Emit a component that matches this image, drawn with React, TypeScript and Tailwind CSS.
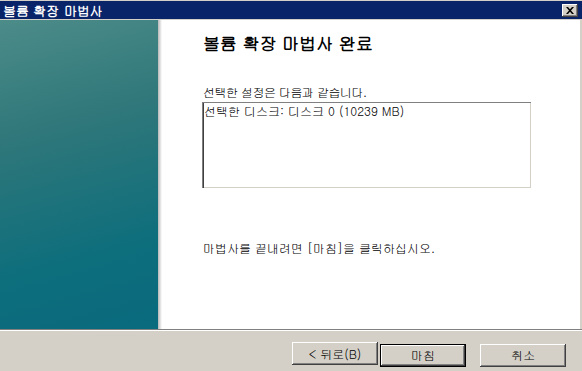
const font = "font-['Gulim','Noto_Sans_CJK_KR',sans-serif]";

function WinButton({
  label,
  isDefault = false,
}: {
  label: string;
  isDefault?: boolean;
}) {
  return (
    <button
      className={
        "h-[23px] w-[86px] bg-[#d4d0c8] text-[12px] leading-none text-black " +
        (isDefault
          ? "shadow-[inset_0_0_0_1px_#000000,inset_-2px_-2px_0_#404040,inset_2px_2px_0_#ffffff,inset_-3px_-3px_0_#808080]"
          : "shadow-[inset_-1px_-1px_0_#404040,inset_1px_1px_0_#ffffff,inset_-2px_-2px_0_#808080]")
      }
    >
      {label}
    </button>
  );
}

export default function App() {
  return (
    <div
      className={`${font} flex h-[371px] w-[582px] flex-col overflow-hidden bg-[#d4d0c8]`}
    >
      {/* title bar */}
      <div className="h-[1px] bg-[#d4d0c8]" />
      <div className="flex h-[18px] items-center justify-between bg-[#0a246a] pl-[3px] pr-[4px]">
        <span className="text-[13px] font-bold leading-none text-white">
          볼륨 확장 마법사
        </span>
        <div className="flex h-[13px] w-[16px] items-center justify-center bg-[#d4d0c8] shadow-[inset_-1px_-1px_0_#404040,inset_1px_1px_0_#ffffff,inset_-2px_-2px_0_#808080]">
          <svg width="8" height="7" viewBox="0 0 8 7">
            <path d="M0 0h2l2 2.2L6 0h2L5 3.5 8 7H6L4 4.8 2 7H0l3-3.5z" fill="#000" />
          </svg>
        </div>
      </div>
      <div className="h-[1px] bg-[#d4d0c8]" />

      {/* body */}
      <div className="flex h-[309px] pr-[2px]">
        <div className="w-[158px] bg-[linear-gradient(165deg,#4c8c89_0%,#2f777a_35%,#0d6e7c_75%,#0a6a7e_100%)]" />
        <div className="flex flex-1 bg-white">
          <div className="w-[4px] bg-[linear-gradient(90deg,#b8b8b8,#ffffff)]" />
          <div className="flex flex-1 flex-col pl-[41px] pt-[13px]">
            <h1 className="text-[17px] font-bold leading-[20px] text-black">
              볼륨 확장 마법사 완료
            </h1>
            <p className="mt-[32px] text-[12px] leading-[14px] tracking-[-0.5px] text-black">
              선택한 설정은 다음과 같습니다.
            </p>
            <div className="-ml-[1px] mt-[3px] h-[86px] w-[329px] bg-white px-[2px] pt-[2px] text-[12px] leading-[14px] text-black shadow-[inset_1px_1px_0_#808080,inset_2px_0_0_#404040,inset_-1px_-1px_0_#d4d0c8]">
              선택한 디스크: 디스크 0 (10239 MB)
            </div>
            <p className="mt-[53px] text-[12px] leading-[14px] text-black">
              마법사를 끝내려면 [마침]을 클릭하십시오.
            </p>
          </div>
        </div>
      </div>

      {/* separator */}
      <div className="h-[1px] bg-[#808080]" />
      <div className="h-[1px] bg-white" />

      {/* footer buttons */}
      <div className="flex flex-1 items-start pl-[292px] pt-[11px]">
        <WinButton label="< 뒤로(B)" />
        <div className="ml-[2px]">
          <WinButton label="마침" isDefault />
        </div>
        <div className="ml-[14px]">
          <WinButton label="취소" />
        </div>
      </div>
    </div>
  );
}
